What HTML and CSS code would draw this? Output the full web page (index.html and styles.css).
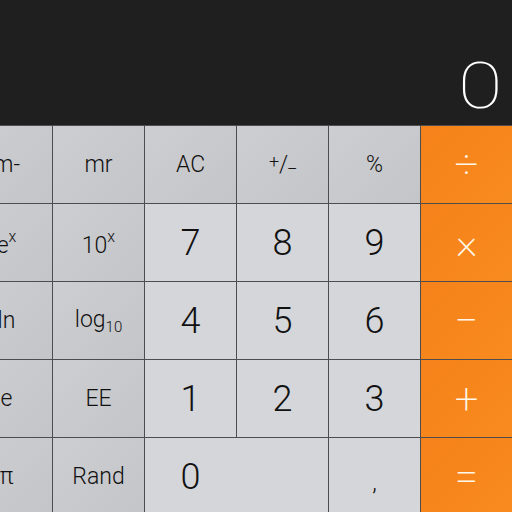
FILE: index.html
```html
<!DOCTYPE html>
<html lang="en">
<head>
    <meta charset="UTF-8">
    <title>Calculator</title>
    <link rel="stylesheet" href="styles.css">
</head>
<body>
    <div class="calc">
        <div class="display"><span>0</span></div>

        <div class="keys">
            <div class="key fn">m-</div>
            <div class="key fn">mr</div>
            <div class="key fn">AC</div>
            <div class="key fn"><span class="pm"><sup>+</sup>/<sub>_</sub></span></div>
            <div class="key fn">%</div>
            <div class="key op">÷</div>

            <div class="key fn"><span>e<sup>x</sup></span></div>
            <div class="key fn"><span>10<sup>x</sup></span></div>
            <div class="key num">7</div>
            <div class="key num">8</div>
            <div class="key num">9</div>
            <div class="key op">×</div>

            <div class="key fn">ln</div>
            <div class="key fn"><span>log<sub>10</sub></span></div>
            <div class="key num">4</div>
            <div class="key num">5</div>
            <div class="key num">6</div>
            <div class="key op">−</div>

            <div class="key fn">e</div>
            <div class="key fn">EE</div>
            <div class="key num">1</div>
            <div class="key num">2</div>
            <div class="key num">3</div>
            <div class="key op">+</div>

            <div class="key fn">π</div>
            <div class="key fn">Rand</div>
            <div class="key num zero"><span>0</span></div>
            <div class="key num comma">,</div>
            <div class="key op">=</div>
        </div>
    </div>
</body>
</html>
```

FILE: styles.css
```css
* {
    box-sizing: border-box;
    margin: 0;
    padding: 0;
}
body {
    width: 512px;
    height: 512px;
    overflow: hidden;
    background: #1f1f1f;
    font-family: Roboto, "Liberation Sans", sans-serif;
}
.display {
    height: 125px;
    background: #1f1f1f;
    color: #fff;
    font-size: 65px;
    font-weight: 100;
    text-align: right;
    padding: 54px 9px 0 0;
    line-height: 1;
}
.display span {
    display: inline-block;
    transform: scaleX(1.25);
    transform-origin: right center;
}
.keys {
    display: grid;
    grid-template-columns: repeat(6, 91px);
    grid-auto-rows: 77px;
    gap: 1px;
    margin-left: -39px;
    padding-top: 1px;
    background: #4d4d4d;
}
.key {
    display: flex;
    align-items: center;
    justify-content: center;
    color: #111;
    font-weight: 300;
}
.fn {
    background: linear-gradient(135deg, #cdced1, #c4c5c8);
    font-size: 23px;
}
.num {
    background: #d5d6d9;
    font-size: 36px;
}
.op {
    background: linear-gradient(135deg, #f5821a, #f88b1f);
    color: #fff8ea;
    font-size: 42px;
    font-weight: 200;
}
.key sup {
    font-size: 16px;
    vertical-align: 11px;
}
.key sub {
    font-size: 15px;
    vertical-align: -5px;
}
.pm sup {
    vertical-align: 4px;
    font-size: 18px;
}
.pm sub {
    vertical-align: 4px;
    font-size: 18px;
}
.zero {
    grid-column: span 2;
    justify-content: flex-start;
}
.zero span {
    width: 91px;
    text-align: center;
}
.comma {
    font-size: 24px;
    padding-top: 10px;
}
```
